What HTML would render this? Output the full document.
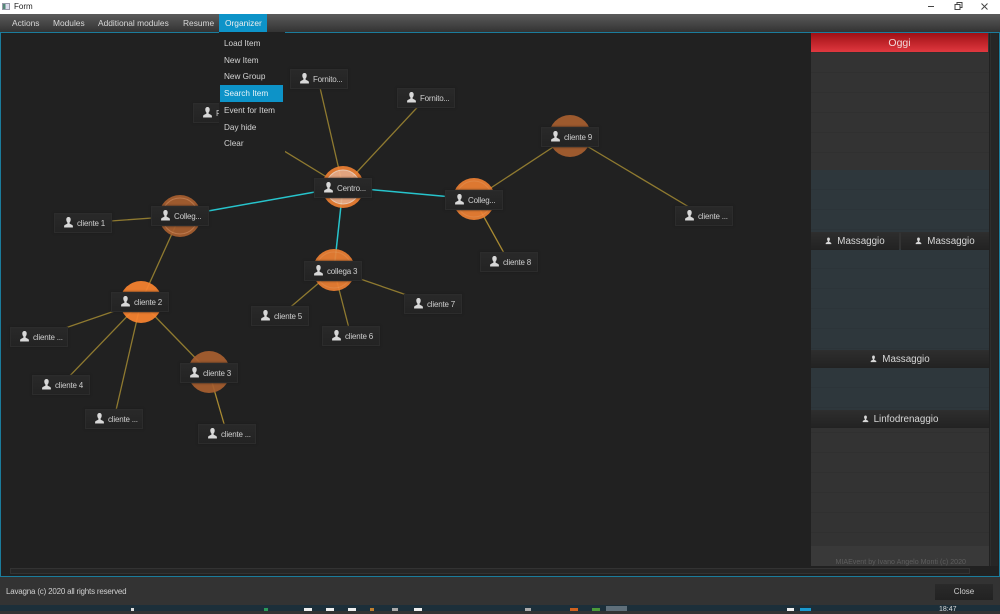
<!DOCTYPE html>
<html><head><meta charset="utf-8"><style>
*{box-sizing:border-box}
html,body{margin:0;padding:0;width:1000px;height:611px;overflow:hidden;background:#333;font-family:"Liberation Sans",sans-serif}
.a{position:absolute}
#title{left:0;top:0;width:1000px;height:14px;background:#fff;color:#222;font-size:8px;line-height:14px;padding-left:14px}
#menu{left:0;top:14px;width:1000px;height:18px;background:linear-gradient(#5b5b5b,#333)}
.m{position:absolute;top:0;height:18px;line-height:18px;color:#d8d8d8;font-size:8.4px;white-space:nowrap}
#canvas{left:0;top:32px;width:1000px;height:545px;background:#212121;border:1px solid #1b7c9c}
.n{position:absolute;width:58px;height:20px;background:linear-gradient(#292929,#232323);border:1px solid #2c2c2c;color:#cfcfcf;font-size:8px;letter-spacing:-.2px;line-height:19px;padding-left:22px;white-space:nowrap;overflow:hidden;box-shadow:0 0 2px #1c1c1c}
.n svg{position:absolute;left:8px;top:3px}
#pop{left:219px;top:32px;width:66px;height:122px;background:#212121;color:#d4d4d4;font-size:8.2px}
#pop div{position:absolute;left:1px;width:63px;height:17px;line-height:17px;padding-left:4px;white-space:nowrap}
.h{position:absolute;height:18px;background:linear-gradient(#2e2e2e,#222);color:#d8d8d8;font-size:9.8px;line-height:20px;text-align:center;white-space:nowrap}
.h svg{vertical-align:-1px;margin-right:5px}
.t{position:absolute;top:608px;height:3px}
</style></head><body>
<svg width="0" height="0" style="position:absolute"><defs><symbol id="p" viewBox="0 0 10 10"><path d="M5 0C3.500 0 2.900 1.200 3 2.600C3.100 3.800 3.500 4.500 4 5L4 6C3 6.700 1.300 6.900 1 8.200L1 9.500L9 9.500L9 8.200C8.700 6.900 7 6.700 6 6L6 5C6.500 4.500 6.900 3.800 7 2.600C7.100 1.200 6.500 0 5 0Z" fill="#d8d8d8"/></symbol></defs></svg>
<div class="a" id="title"><span class="a" style="left:2px;top:3px;width:8px;height:7px;background:linear-gradient(90deg,#587 0 40%,#dde 40%);border:1px solid #99a"></span>Form</div>
<svg class="a" style="left:920px;top:0" width="80" height="14"><path d="M8 6.500H14" stroke="#444"/><path d="M35 4.500h5v5h-5zM37 4.500v-2h5v5h-2" stroke="#444" fill="none"/><path d="M61.500 3.500L67.500 9.500M67.500 3.500L61.500 9.500" stroke="#444"/></svg>
<div class="a" id="menu">
<span class="m" style="left:12px">Actions</span><span class="m" style="left:53px">Modules</span><span class="m" style="left:98px">Additional modules</span><span class="m" style="left:183px">Resume</span>
<span class="m" style="left:219px;width:48px;background:#0d93c8;color:#eee;padding-left:6px">Organizer</span>
</div>
<div class="a" id="canvas"></div>
<svg class="a" style="left:0;top:0" width="811" height="577">
<g stroke="#8f7a30" stroke-width="1.300" fill="none">
<path d="M318 79L343 187M426 98L343 187M222 113L343 187M83 223L180 216M180 216L141 302M141 302L39 337M141 302L61 385M141 302L114 419M141 302L209 372M474 199L570 136M570 136L704 216M334 270L280 316M334 270L351 336M334 270L433 304"/>
<path d="M209 372L227 434M474 199L509 262" stroke="#a88a32"/>
</g>
<g stroke="#27c4cc" stroke-width="1.500" fill="none"><path d="M180 216L343 187M343 187L474 199M343 187L334 270"/></g>
<g opacity=".92">
<circle cx="180" cy="216" r="21" fill="#a85f30"/><circle cx="180" cy="216" r="18" fill="none" stroke="#c98050"/>
<circle cx="343" cy="187" r="21" fill="#ee8033"/><circle cx="343" cy="187" r="17" fill="#f3b087" stroke="#f9d6be"/>
<circle cx="474" cy="199" r="21" fill="#ee8033"/><circle cx="474" cy="199" r="18" fill="none" stroke="#f08e48"/>
<circle cx="334" cy="270" r="21" fill="#ee8033"/><circle cx="334" cy="270" r="18" fill="none" stroke="#f08e48"/>
<circle cx="141" cy="302" r="21" fill="#fb8430"/>
<circle cx="209" cy="372" r="21" fill="#a85f30"/>
<circle cx="570" cy="136" r="21" fill="#a85f30"/>
</g>
</svg>
<div class="n" style="left:193px;top:103px"><svg width="11" height="11"><use href="#p"/></svg>Fornitore</div>
<div class="n" style="left:290px;top:69px"><svg width="11" height="11"><use href="#p"/></svg>Fornito...</div>
<div class="n" style="left:397px;top:88px"><svg width="11" height="11"><use href="#p"/></svg>Fornito...</div>
<div class="n" style="left:314px;top:178px"><svg width="11" height="11"><use href="#p"/></svg>Centro...</div>
<div class="n" style="left:445px;top:190px"><svg width="11" height="11"><use href="#p"/></svg>Colleg...</div>
<div class="n" style="left:304px;top:261px"><svg width="11" height="11"><use href="#p"/></svg>collega 3</div>
<div class="n" style="left:151px;top:206px"><svg width="11" height="11"><use href="#p"/></svg>Colleg...</div>
<div class="n" style="left:54px;top:213px"><svg width="11" height="11"><use href="#p"/></svg>cliente 1</div>
<div class="n" style="left:111px;top:292px"><svg width="11" height="11"><use href="#p"/></svg>cliente 2</div>
<div class="n" style="left:541px;top:127px"><svg width="11" height="11"><use href="#p"/></svg>cliente 9</div>
<div class="n" style="left:675px;top:206px"><svg width="11" height="11"><use href="#p"/></svg>cliente ...</div>
<div class="n" style="left:480px;top:252px"><svg width="11" height="11"><use href="#p"/></svg>cliente 8</div>
<div class="n" style="left:404px;top:294px"><svg width="11" height="11"><use href="#p"/></svg>cliente 7</div>
<div class="n" style="left:322px;top:326px"><svg width="11" height="11"><use href="#p"/></svg>cliente 6</div>
<div class="n" style="left:251px;top:306px"><svg width="11" height="11"><use href="#p"/></svg>cliente 5</div>
<div class="n" style="left:10px;top:327px"><svg width="11" height="11"><use href="#p"/></svg>cliente ...</div>
<div class="n" style="left:32px;top:375px"><svg width="11" height="11"><use href="#p"/></svg>cliente 4</div>
<div class="n" style="left:85px;top:409px"><svg width="11" height="11"><use href="#p"/></svg>cliente ...</div>
<div class="n" style="left:180px;top:363px"><svg width="11" height="11"><use href="#p"/></svg>cliente 3</div>
<div class="n" style="left:198px;top:424px"><svg width="11" height="11"><use href="#p"/></svg>cliente ...</div>
<div class="a" id="pop">
<div style="top:3px">Load Item</div><div style="top:20px">New Item</div><div style="top:36px">New Group</div>
<div style="top:53px;background:#0d93c8;color:#e8f4f8;height:17px">Search Item</div>
<div style="top:70px">Event for Item</div><div style="top:87px">Day hide</div><div style="top:103px">Clear</div>
</div>
<div class="a" style="left:811px;top:33px;width:178px;height:533px;background:repeating-linear-gradient(#333 0 19px,#303030 19px 20px)"></div>
<div class="a" style="left:811px;top:170px;width:178px;height:62px;background:repeating-linear-gradient(#2e373c 0 19px,#2c3439 19px 20px)"></div>
<div class="a" style="left:811px;top:249px;width:178px;height:101px;background:repeating-linear-gradient(#2e373c 0 19px,#2c3439 19px 20px)"></div>
<div class="a" style="left:811px;top:368px;width:178px;height:42px;background:repeating-linear-gradient(#2e373c 0 19px,#2c3439 19px 20px)"></div>
<div class="a" style="left:811px;top:546px;width:178px;height:20px;background:#393939"></div>
<div class="a" style="left:811px;top:33px;width:177px;height:19px;background:linear-gradient(#a01015,#e0383f);color:#f0d8d8;font-size:10.500px;line-height:21px;text-align:center">Oggi</div>
<div class="h" style="left:811px;top:232px;width:88px"><svg width="7" height="8"><use href="#p"/></svg>Massaggio</div>
<div class="h" style="left:901px;top:232px;width:88px"><svg width="7" height="8"><use href="#p"/></svg>Massaggio</div>
<div class="h" style="left:811px;top:350px;width:178px"><svg width="7" height="8"><use href="#p"/></svg>Massaggio</div>
<div class="h" style="left:811px;top:410px;width:178px"><svg width="7" height="8"><use href="#p"/></svg>Linfodrenaggio</div>
<div class="a" style="left:811px;top:556px;width:178px;height:10px;color:#5e5e5e;font-size:7.100px;line-height:12px;text-align:right;padding-right:23px;white-space:nowrap">MIAEvent by Ivano Angelo Monti (c) 2020</div>
<div class="a" style="left:990px;top:33px;width:8px;height:533px;background:#262626;border-left:1px solid #2e2e2e"></div>
<div class="a" style="left:10px;top:568px;width:960px;height:6px;background:#262626;border:1px solid #333"></div>
<div class="a" style="left:0;top:577px;width:1000px;height:28px;background:#333"></div>
<div class="a" style="left:6px;top:586px;color:#cfcfcf;font-size:8px;letter-spacing:-.2px;line-height:12px">Lavagna (c) 2020 all rights reserved</div>
<div class="a" style="left:935px;top:584px;width:58px;height:16px;background:linear-gradient(#2a2a2a,#222);color:#d0d0d0;font-size:8px;line-height:16px;text-align:center">Close</div>
<div class="a" style="left:0;top:605px;width:1000px;height:6px;background:#1c2f3a"></div>
<div class="a" style="left:606px;top:606px;width:21px;height:5px;background:#5f6f7a"></div>
<div class="t" style="left:131px;width:3px;background:#ddd"></div><div class="t" style="left:264px;width:4px;background:#2a9a5a"></div><div class="t" style="left:304px;width:8px;background:#eee"></div><div class="t" style="left:326px;width:8px;background:#eee"></div><div class="t" style="left:348px;width:8px;background:#eee"></div><div class="t" style="left:370px;width:4px;background:#c08030"></div><div class="t" style="left:392px;width:6px;background:#aaa"></div><div class="t" style="left:414px;width:8px;background:#eee"></div><div class="t" style="left:525px;width:6px;background:#aaa"></div><div class="t" style="left:570px;width:8px;background:#d0621f"></div><div class="t" style="left:592px;width:8px;background:#4a9a3a"></div><div class="t" style="left:787px;width:7px;background:#eee"></div><div class="t" style="left:800px;width:11px;background:#1a9ad0"></div>
<div class="a" style="left:939px;top:606px;color:#ddd;font-size:7px;line-height:8px">18:47</div>
</body></html>
